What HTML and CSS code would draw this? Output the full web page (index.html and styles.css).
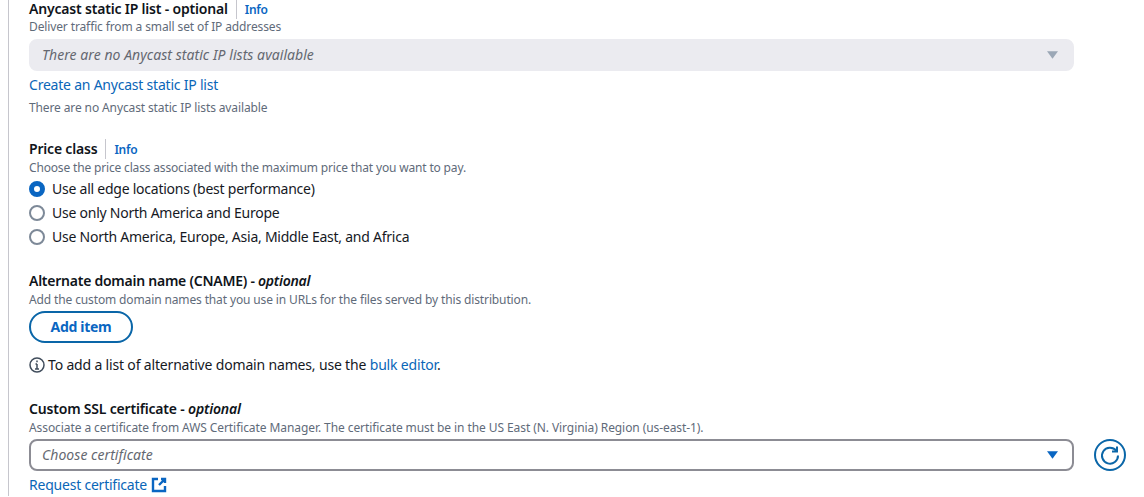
FILE: index.html
```html
<!DOCTYPE html>
<html lang="en">
<head>
<meta charset="utf-8">
<title>Distribution settings</title>
<link rel="stylesheet" href="styles.css">
</head>
<body>
<main class="panel">
  <section class="field field-first">
    <div class="label-row"><span class="label">Anycast static IP list - optional</span><a class="info">Info</a></div>
    <p class="desc">Deliver traffic from a small set of IP addresses</p>
    <div class="select-row">
      <div class="select disabled"><span>There are no Anycast static IP lists available</span><svg class="caret" viewBox="0 0 12 8"><path d="M0 0h12L6 8z"/></svg></div>
    </div>
    <a class="link create">Create an Anycast static IP list</a>
    <p class="desc note">There are no Anycast static IP lists available</p>
  </section>
  <section class="field price">
    <div class="label-row"><span class="label">Price class</span><a class="info">Info</a></div>
    <p class="desc">Choose the price class associated with the maximum price that you want to pay.</p>
    <div class="radios">
      <div class="radio-row"><span class="radio checked"></span>Use all edge locations (best performance)</div>
      <div class="radio-row"><span class="radio"></span>Use only North America and Europe</div>
      <div class="radio-row"><span class="radio"></span>Use North America, Europe, Asia, Middle East, and Africa</div>
    </div>
  </section>
  <section class="field cname">
    <div class="label-row"><span class="label">Alternate domain name (CNAME) - <em>optional</em></span></div>
    <p class="desc">Add the custom domain names that you use in URLs for the files served by this distribution.</p>
    <button class="btn" type="button">Add item</button>
    <p class="hint"><svg class="info-icon" viewBox="0 0 16 16"><circle cx="8" cy="8" r="7"/><path d="M8 7v5M6 12h4M6.5 7H8"/><path class="dot" d="M8 3.6v1.6"/></svg><span>To add a list of alternative domain names, use the <a class="link">bulk editor</a>.</span></p>
  </section>
  <section class="field ssl">
    <div class="label-row"><span class="label">Custom SSL certificate - <em>optional</em></span></div>
    <p class="desc">Associate a certificate from AWS Certificate Manager. The certificate must be in the US East (N. Virginia) Region (us-east-1).</p>
    <div class="select-row">
      <div class="select"><span>Choose certificate</span><svg class="caret" viewBox="0 0 12 8"><path d="M0 0h12L6 8z"/></svg></div>
      <button class="refresh" type="button" aria-label="Refresh"><svg viewBox="0 0 32 32"><circle class="ring" cx="16" cy="16" r="15"/><path d="M22.2 11.6A8 8 0 1 0 24 16.5"/><path d="M23 7.5v5h-5"/></svg></button>
    </div>
    <a class="link request">Request certificate<svg class="ext" viewBox="0 0 16 16"><path d="M7 2H2v12h12V9"/><path d="M10 2h4v4M14 2L8 8"/></svg></a>
  </section>
</main>
</body>
</html>
```
FILE: styles.css
```css
html, body {
  margin: 0;
  padding: 0;
  height: 497px;
  overflow: hidden;
  background: #ffffff;
}
body {
  font-family: "Noto Sans", "Open Sans", sans-serif;
  font-size: 14px;
  line-height: 20px;
  letter-spacing: -0.24px;
  color: #16191f;
}
.panel {
  margin-left: 8px;
  border-left: 1px solid #c6c6cd;
  padding-left: 20px;
  height: 497px;
  box-sizing: border-box;
}
.field { display: flex; flex-direction: column; align-items: flex-start; }
.field-first { margin-top: -1px; }
.price { margin-top: 23px; }
.cname { margin-top: 22px; }
.ssl { margin-top: 24px; }
.label-row { display: flex; align-items: center; height: 20px; }
.label { font-weight: 600; font-size: 14px; letter-spacing: -0.19px; color: #0f141a; }
.cname .label { letter-spacing: -0.25px; }
.label em { font-style: italic; }
.info {
  margin-left: 8px;
  padding-left: 8px;
  padding-top: 1px;
  border-left: 1px solid #c6c6cd;
  font-size: 12px;
  font-weight: 600;
  color: #0a66c2;
  line-height: 19px;
}
.desc {
  margin: 0;
  font-size: 12px;
  line-height: 16px;
  letter-spacing: -0.12px;
  color: #5f6b7a;
}
.price .desc { margin-top: 1px; letter-spacing: -0.165px; }
.cname .desc { margin-top: 1px; letter-spacing: -0.13px; }
.ssl .desc { margin-top: 1px; letter-spacing: -0.08px; }
.select-row { display: flex; align-items: center; margin-top: 4px; }
.ssl .select-row { margin-top: 3px; }
.select {
  width: 1045px;
  height: 32px;
  box-sizing: border-box;
  border: 2px solid #8c8c94;
  border-radius: 8px;
  padding: 0 14px 0 11px;
  display: flex;
  align-items: center;
  justify-content: space-between;
  font-style: italic;
  letter-spacing: 0.05px;
  color: #656871;
}
.select.disabled { background: #ebebf0; border-color: #ebebf0; }
.caret { width: 11px; height: 8px; fill: #0a66c2; }
.disabled .caret { fill: #9ba7b6; }
.link { color: #0a66b8; }
.create { margin-top: 4px; letter-spacing: -0.22px; }
.note { margin-top: 5px; }
.radios { display: flex; flex-direction: column; margin-top: 1px; }
.radio-row { display: flex; align-items: center; height: 24px; gap: 7px; }
.radio {
  width: 16px;
  height: 16px;
  box-sizing: border-box;
  border: 2px solid #7d8998;
  border-radius: 50%;
  background: #fff;
}
.radio.checked { border: 5px solid #0a66c2; }
.btn {
  margin-top: 3px;
  width: 104px;
  height: 32px;
  box-sizing: border-box;
  border: 2px solid #0a66a8;
  border-radius: 20px;
  background: #fff;
  color: #0a66c2;
  font: 700 14px/20px "Noto Sans", "Open Sans", sans-serif;
  letter-spacing: -0.3px;
  padding: 0;
}
.hint { margin: 12px 0 0; display: flex; align-items: center; letter-spacing: -0.17px; }
.info-icon {
  width: 16px;
  height: 16px;
  margin-right: 3px;
  fill: none;
  stroke: #414d5c;
  stroke-width: 1.5;
}
.refresh {
  margin-left: 20px;
  width: 32px;
  height: 32px;
  padding: 0;
  border: 0;
  background: none;
}
.refresh svg { width: 32px; height: 32px; fill: none; stroke: #0a66a8; stroke-width: 2; display: block; }
.request { margin-top: 4px; display: flex; align-items: center; letter-spacing: -0.22px; }
.ext { width: 16px; height: 16px; margin-left: 4px; fill: none; stroke: #0a66c2; stroke-width: 2.4; }
```
